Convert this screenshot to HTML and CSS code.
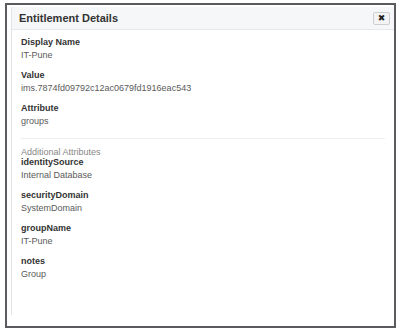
FILE: index.html
```html
<!DOCTYPE html>
<html lang="en">
<head>
    <meta charset="UTF-8">
    <title>Entitlement Details</title>
    <link rel="stylesheet" href="styles.css">
</head>
<body>
    <div class="frame">
        <div class="modal">
            <div class="modal-header">
                <span class="modal-title">Entitlement Details</span>
                <button class="close-button" title="Close">&#10006;</button>
            </div>
            <div class="modal-body">
                <div class="field">
                    <div class="field-label">Display Name</div>
                    <div class="field-value">IT-Pune</div>
                </div>
                <div class="field">
                    <div class="field-label">Value</div>
                    <div class="field-value">ims.7874fd09792c12ac0679fd1916eac543</div>
                </div>
                <div class="field">
                    <div class="field-label">Attribute</div>
                    <div class="field-value">groups</div>
                </div>

                <div class="section-title">Additional Attributes</div>
                <div class="field">
                    <div class="field-label">identitySource</div>
                    <div class="field-value">Internal Database</div>
                </div>
                <div class="field">
                    <div class="field-label">securityDomain</div>
                    <div class="field-value">SystemDomain</div>
                </div>
                <div class="field">
                    <div class="field-label">groupName</div>
                    <div class="field-value">IT-Pune</div>
                </div>
                <div class="field">
                    <div class="field-label">notes</div>
                    <div class="field-value">Group</div>
                </div>
            </div>
        </div>
    </div>
</body>
</html>
```

FILE: styles.css
```css
body {
    margin: 0;
    font-family: "Liberation Sans", Arial, sans-serif;
    background: #fff;
}
.frame {
    margin: 3px 4px 5px 5px;
    height: 321px;
    border: 2px solid #5b5b5f;
    background: #fff;
}
.modal {
    margin: 2px 0 0 4px;
    height: 308px;
    border-left: 1px solid #e1e3e6;
}
.modal-header {
    display: flex;
    align-items: center;
    justify-content: space-between;
    height: 22px;
    padding: 0 4px 0 7px;
    background: #f6f7f8;
    border-bottom: 1px solid #e6e9ec;
}
.modal-title {
    font-size: 11px;
    font-weight: bold;
    color: #333;
}
.close-button {
    width: 17px;
    height: 13px;
    padding: 0;
    border: 1px solid #cfcfcf;
    border-radius: 2px;
    background: #f4f4f4;
    color: #222;
    font-size: 9px;
    font-weight: bold;
    line-height: 11px;
    font-family: "DejaVu Sans", sans-serif;
}
.modal-body {
    padding: 6px 9px 0 9px;
}
.field {
    margin-bottom: 7px;
}
.field-label {
    font-size: 9px;
    font-weight: bold;
    line-height: 12px;
    color: #333;
}
.field-value {
    font-size: 9px;
    line-height: 14px;
    color: #5a5a5a;
}
.section-title {
    margin-top: 10px;
    padding-top: 9px;
    border-top: 1px solid #eceef0;
    font-size: 9px;
    line-height: 8px;
    color: #888;
}
.field:nth-child(3) {
    margin-bottom: 0;
}
```
